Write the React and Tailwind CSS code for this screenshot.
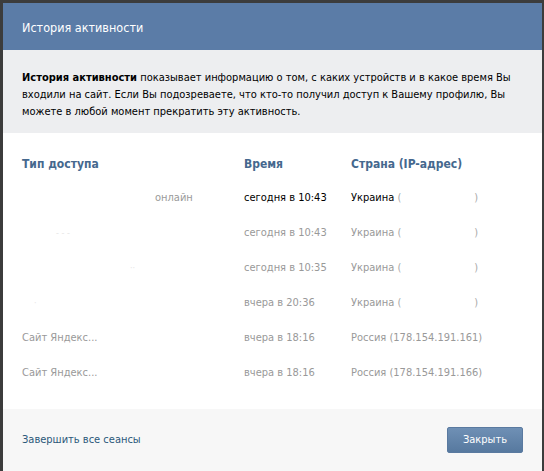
import React from "react";

const ROWS = [
  { extra: "онлайн", time: "сегодня в 10:43", country: "Украина", active: true },
  { smudge: "- - -", smudgePad: "pl-[34px]", time: "сегодня в 10:43", country: "Украина" },
  { smudge: "··", smudgePad: "pl-[108px]", time: "сегодня в 10:35", country: "Украина" },
  { smudge: "·", smudgePad: "pl-[12px]", time: "вчера в 20:36", country: "Украина" },
  { type: "Сайт Яндекс...", time: "вчера в 18:16", country: "Россия", ip: "178.154.191.161" },
  { type: "Сайт Яндекс...", time: "вчера в 18:16", country: "Россия", ip: "178.154.191.166" },
];

const FONT = { fontFamily: '"DejaVu Sans Condensed", "DejaVu Sans", sans-serif' };

export default function App() {
  return (
    <div
      className="w-[544px] h-[471px] overflow-hidden bg-[#3c3c3c] pl-[3px] pt-[3px] pr-[2px]"
      style={FONT}
    >
      <div className="flex flex-col h-full">
        {/* header */}
        <div className="h-[47px] shrink-0 bg-[#5b7ca7] px-[19px] pt-[3px] flex items-center">
          <span className="text-white text-[12.5px]">История активности</span>
        </div>

        {/* info */}
        <div className="h-[83px] shrink-0 bg-[#edeef0] px-[19px] pt-[19px] text-[11px] leading-[17px] text-black whitespace-nowrap">
          <b>История активности</b> показывает информацию о том, с каких устройств и в какое время Вы
          <br />
          входили на сайт. Если Вы подозреваете, что кто-то получил доступ к Вашему профилю, Вы
          <br />
          можете в любой момент прекратить эту активность.
        </div>

        {/* table */}
        <div className="h-[276px] shrink-0 bg-white px-[19px] pt-[13px] text-[11px]">
          <div className="flex h-[35px] items-center font-bold text-[#45688e] text-[12px]">
            <div className="w-[222px]">Тип доступа</div>
            <div className="w-[107px]">Время</div>
            <div>Страна (IP-адрес)</div>
          </div>
          {ROWS.map((r, i) => (
            <div key={i} className="flex h-[35px] items-center text-[#999]">
              <div className="w-[222px] flex">
                {r.type && <span>{r.type}</span>}
                {r.extra && <span className="pl-[133px] text-[#9a9a9a]">{r.extra}</span>}
                {r.smudge && <span className={r.smudgePad + " text-[#e6e6e6] text-[9px]"}>{r.smudge}</span>}
              </div>
              <div className={"w-[107px] " + (r.active ? "text-black" : "")}>{r.time}</div>
              <div className={r.active ? "text-black" : ""}>
                {r.country}{" "}
                {r.ip ? (
                  <span>({r.ip})</span>
                ) : (
                  <span className="text-[#aaa]">
                    (<span className="inline-block w-[73px]" />)
                  </span>
                )}
              </div>
            </div>
          ))}
        </div>

        {/* footer */}
        <div className="flex-1 bg-[#f7f7f7] px-[19px] flex items-center justify-between">
          <span className="text-[#2b587a] text-[11px]">Завершить все сеансы</span>
          <button className="w-[76px] h-[26px] rounded-[2px] bg-gradient-to-b from-[#6f90b5] to-[#57799f] border border-[#5a7aa0] text-white text-[11px]">
            Закрыть
          </button>
        </div>
      </div>
    </div>
  );
}
